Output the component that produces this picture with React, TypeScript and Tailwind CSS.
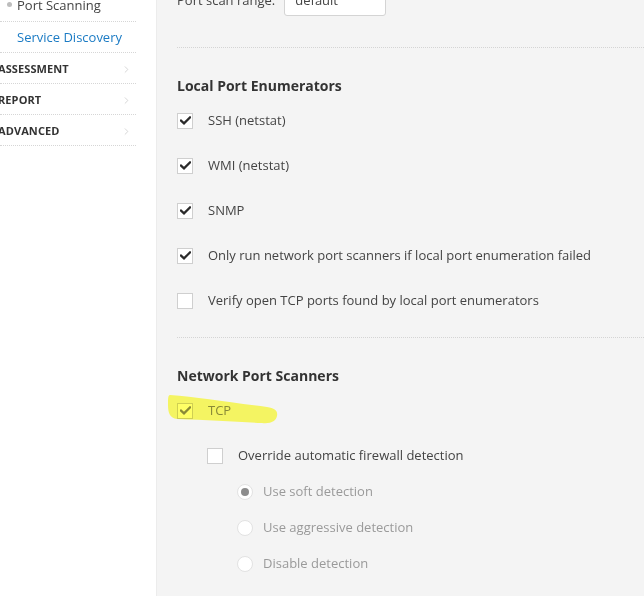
import { ChevronRight } from "lucide-react";

const navItems = [
  { label: "Port Scanning", kind: "sub" },
  { label: "Service Discovery", kind: "active" },
  { label: "ASSESSMENT", kind: "section" },
  { label: "REPORT", kind: "section" },
  { label: "ADVANCED", kind: "section" },
];

const localEnumerators = [
  { label: "SSH (netstat)", checked: true },
  { label: "WMI (netstat)", checked: true },
  { label: "SNMP", checked: true },
  { label: "Only run network port scanners if local port enumeration failed", checked: true },
  { label: "Verify open TCP ports found by local port enumerators", checked: false },
];

const radios = [
  { label: "Use soft detection", selected: true },
  { label: "Use aggressive detection", selected: false },
  { label: "Disable detection", selected: false },
];

const Checkbox = ({ checked, dim }: { checked: boolean; dim?: boolean }) => (
  <span className="w-[16px] h-[16px] shrink-0 bg-white border border-[#cfcfcf] flex items-center justify-center">
    {checked && (
      <svg width="11" height="9" viewBox="0 0 11 9">
        <path
          d="M1 4.6 L4 7.4 L10 1.4"
          fill="none"
          stroke={dim ? "#8a8a8a" : "#2b2b2b"}
          strokeWidth="2.2"
          strokeLinecap="square"
        />
      </svg>
    )}
  </span>
);

const Radio = ({ selected }: { selected: boolean }) => (
  <span className="w-[16px] h-[16px] shrink-0 rounded-full bg-white border border-[#e2e2e2] flex items-center justify-center">
    {selected && <span className="w-[8px] h-[8px] rounded-full bg-[#8c8c8c]" />}
  </span>
);

export default function App() {
  return (
    <div className="flex min-h-[596px] h-[596px] overflow-hidden bg-[#f4f4f4] font-['Open_Sans',sans-serif]">
      {/* sidebar */}
      <aside className="w-[157px] shrink-0 bg-white border-r border-[#ececec] overflow-hidden">
        <ul className="w-[136px] -mt-[9px]">
          {navItems.map((item) => (
            <li
              key={item.label}
              className="h-[31px] flex items-center border-b border-dotted border-[#d6d6d6]"
            >
              {item.kind === "sub" && (
                <span className="flex items-center text-[13px] text-[#444]">
                  <span className="w-[5px] h-[5px] rounded-full bg-[#bdbdbd] ml-[7px] mr-[5px] -mt-[3px]" />
                  {item.label}
                </span>
              )}
              {item.kind === "active" && (
                <span className="pl-[17px] text-[13px] text-[#1b7bc4] mt-[2px]">{item.label}</span>
              )}
              {item.kind === "section" && (
                <>
                  <span className="-ml-[2px] flex-1 text-[11px] font-bold text-[#333] tracking-[0.1px] mt-[2px]">
                    {item.label}
                  </span>
                  <ChevronRight className="w-[11px] h-[11px] text-[#c4c4c4] mr-[4px] mt-[2px]" strokeWidth={1.5} />
                </>
              )}
            </li>
          ))}
        </ul>
      </aside>

      {/* main */}
      <main className="flex-1 pl-[20px] -mt-[14px] text-[13px] text-[#444]">
        <div className="flex items-center h-[30px] gap-[9px]">
          <span className="text-[#444]">Port scan range:</span>
          <span className="w-[102px] h-[30px] bg-white border border-[#d4d4d4] rounded-[3px] flex items-center px-[10px] text-[#444]">
            default
          </span>
        </div>
        <div className="mt-[31px] border-b border-dotted border-[#d4d4d4]" />

        <h3 className="mt-[28px] h-[20px] leading-[20px] text-[14px] font-bold text-[#333]">
          Local Port Enumerators
        </h3>
        <div className="mt-[2px]">
          {localEnumerators.map((row) => (
            <label key={row.label} className="h-[45px] flex items-center gap-[15px]">
              <Checkbox checked={row.checked} />
              <span>{row.label}</span>
            </label>
          ))}
        </div>
        <div className="mt-[14px] border-b border-dotted border-[#d4d4d4]" />

        <h3 className="mt-[28px] h-[20px] leading-[20px] text-[14px] font-bold text-[#333]">
          Network Port Scanners
        </h3>
        <div className="mt-[2px]">
          <label className="relative h-[45px] flex items-center gap-[15px]">
            <Checkbox checked dim />
            <span className="text-[#8a8a8a]">TCP</span>
            <svg
              className="absolute left-[-10px] top-[5px] mix-blend-multiply pointer-events-none"
              width="112"
              height="34"
              viewBox="0 0 112 34"
            >
              <path
                d="M3 2 C30 4 60 9 100 14 C108 15 111 18 110 23 C109 28 104 31 95 30 C70 29 40 27 10 26 C3 25 1 20 1 12 C1 6 1 2 3 2 Z"
                fill="#ffff5e"
                opacity="0.95"
              />
            </svg>
          </label>
          <label className="h-[45px] flex items-center gap-[15px] pl-[30px]">
            <Checkbox checked={false} />
            <span>Override automatic firewall detection</span>
          </label>
          <div className="-mt-[4px] pl-[60px]">
            {radios.map((r) => (
              <div key={r.label} className="h-[36px] flex items-center gap-[10px] text-[#9a9a9a]">
                <Radio selected={r.selected} />
                <span>{r.label}</span>
              </div>
            ))}
          </div>
        </div>
      </main>
    </div>
  );
}
